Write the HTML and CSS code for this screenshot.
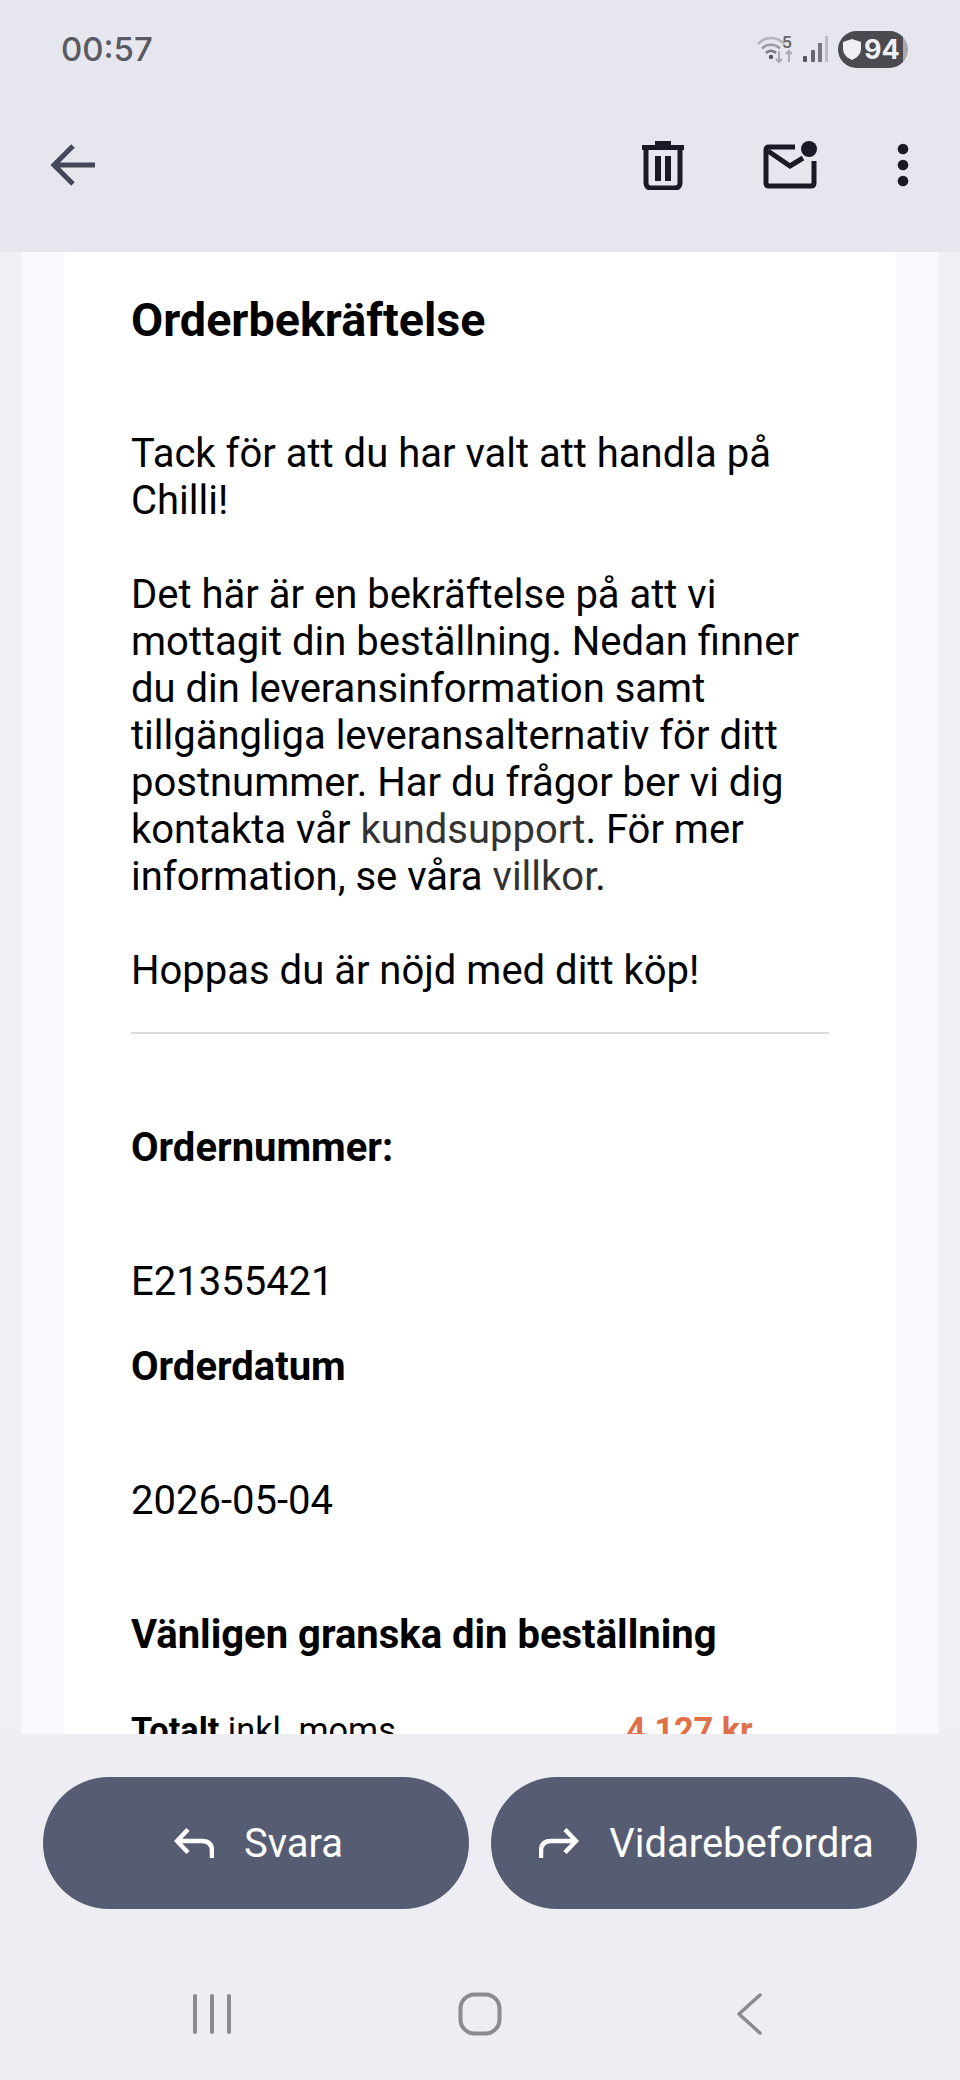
FILE: index.html
```html
<!DOCTYPE html>
<html lang="sv">
<head>
    <title>Orderbekräftelse</title>
    <meta charset="utf-8" />
    <meta name="viewport" content="width=device-width, initial-scale=1" />
    <link rel="stylesheet" href="styles.css">
</head>
<body>
<div class="phone">
    <div class="topbar">
        <div class="status">
            <span class="clock">00:57</span>
            <div class="status-icons">
                <svg class="wifi" width="40" height="30" viewBox="0 0 40 30" fill="none">
                    <path d="M1 10 C8 2 20 2 27 10" stroke="#b4b4ba" stroke-width="2.6"/>
                    <path d="M5 14.500 C10 9.500 18 9.500 23 14.500" stroke="#9a9aa0" stroke-width="2.6"/>
                    <path d="M9 19 C12 16 16 16 19 19" stroke="#77777d" stroke-width="2.6"/>
                    <circle cx="14" cy="23" r="2.2" fill="#55555b"/>
                    <path d="M22 17 V28 M19 25 L22 28 L25 25" stroke="#aaaab0" stroke-width="2"/>
                    <path d="M32 28 V17 M29 20 L32 17 L35 20" stroke="#aaaab0" stroke-width="2"/>
                </svg>
                <span class="wifi-five">5</span>
                <svg class="signal" width="26" height="28" viewBox="0 0 26 28">
                    <rect x="1" y="21" width="4" height="6" rx="1" fill="#55555b"/>
                    <rect x="9" y="15" width="4" height="12" fill="#66666c"/>
                    <rect x="16" y="8" width="4" height="19" fill="#77777d"/>
                    <rect x="23" y="1" width="3" height="26" fill="#bcbcc4"/>
                </svg>
                <div class="battery">
                    <svg width="18" height="21" viewBox="0 0 19 22">
                        <path d="M9.500 0 L19 3 V10 C19 16 15 20 9.500 22 C4 20 0 16 0 10 V3 Z" fill="#f0f0f4"/>
                    </svg>
                    <span>94</span>
                </div>
            </div>
        </div>
        <div class="toolbar">
            <svg class="back" width="46" height="44" viewBox="0 0 46 44" fill="none">
                <path d="M23 3 L4 22 L23 41 M4 22 H45" stroke="#44465a" stroke-width="5"/>
            </svg>
            <div class="actions">
                <svg width="44" height="50" viewBox="0 0 44 50">
                    <path d="M14 1 H30 V5 H43 V10 H1 V5 H14 Z" fill="#1a1a26"/>
                    <path d="M5 10 V43 C5 46 7 48 10 48 H34 C37 48 39 46 39 43 V10" fill="none" stroke="#1a1a26" stroke-width="5"/>
                    <rect x="14" y="16" width="6" height="25" fill="#1a1a26"/>
                    <rect x="24" y="16" width="6" height="25" fill="#1a1a26"/>
                </svg>
                <svg width="56" height="50" viewBox="0 0 56 50" fill="none">
                    <path d="M32 7 H6 Q3 7 3 10 V43 Q3 46 6 46 H48 Q51 46 51 43 V21" stroke="#1a1a26" stroke-width="5"/>
                    <path d="M5 11 L27 26 L40 18" stroke="#1a1a26" stroke-width="5"/>
                    <circle cx="46" cy="9" r="8" fill="#1a1a26"/>
                </svg>
                <svg class="more" width="12" height="44" viewBox="0 0 12 44">
                    <circle cx="6" cy="6" r="5.3" fill="#1a1a26"/>
                    <circle cx="6" cy="22" r="5.3" fill="#1a1a26"/>
                    <circle cx="6" cy="38" r="5.3" fill="#1a1a26"/>
                </svg>
            </div>
        </div>
    </div>

    <div class="mail-scroll">
        <div class="mail-outer">
            <div class="mail">
                <h1>Orderbekräftelse</h1>
                <p class="first">Tack för att du har valt att handla på Chilli!</p>
                <p>Det här är en bekräftelse på att vi mottagit din beställning. Nedan finner du din leveransinformation samt tillgängliga leveransalternativ för ditt postnummer. Har du frågor ber vi dig kontakta vår <a href="#">kundsupport</a>. För mer information, se våra <a href="#">villkor</a>.</p>
                <p>Hoppas du är nöjd med ditt köp!</p>
                <hr />
                <h2 class="order-label">Ordernummer:</h2>
                <div class="order-value">E21355421</div>
                <h2 class="date-label">Orderdatum</h2>
                <div class="order-value">2026-05-04</div>
                <h2 class="review">Vänligen granska din beställning</h2>
                <div class="total">
                    <span><b>Totalt</b> inkl. moms</span>
                    <b class="price">4 127 kr</b>
                </div>
            </div>
        </div>
    </div>

    <div class="bottom">
        <div class="buttons">
            <a class="pill" href="#">
                <svg width="40" height="30" viewBox="0 0 40 30" fill="none">
                    <path d="M14 1.500 L3 13 L14 24.500 M3 13 H28 Q38 13 38 23 V30" stroke="#fff" stroke-width="4.5"/>
                </svg>
                Svara
            </a>
            <a class="pill" href="#">
                <svg width="40" height="30" viewBox="0 0 40 30" fill="none">
                    <path d="M26 1.500 L37 13 L26 24.500 M37 13 H12 Q2 13 2 23 V30" stroke="#fff" stroke-width="4.5"/>
                </svg>
                Vidarebefordra
            </a>
        </div>
        <div class="navbar">
            <svg width="38" height="42" viewBox="0 0 38 42">
                <rect x="0" y="1" width="4" height="40" rx="2" fill="#8a8a90"/>
                <rect x="17" y="1" width="4" height="40" rx="2" fill="#8a8a90"/>
                <rect x="34" y="1" width="4" height="40" rx="2" fill="#8a8a90"/>
            </svg>
            <svg class="nav-home" width="44" height="44" viewBox="0 0 44 44" fill="none">
                <rect x="2.500" y="2.500" width="39" height="39" rx="14" stroke="#8a8a90" stroke-width="4"/>
            </svg>
            <svg class="nav-back" width="30" height="44" viewBox="0 0 30 44" fill="none">
                <path d="M25 3 L4 22 L25 41" stroke="#8a8a90" stroke-width="3.5" stroke-linecap="round" stroke-linejoin="round"/>
            </svg>
        </div>
    </div>
</div>
</body>
</html>
```

FILE: styles.css
```css
* {
    box-sizing: border-box;
}

html, body {
    margin: 0;
    padding: 0;
}

body {
    background: #ededf3;
    font-family: Roboto, 'Liberation Sans', sans-serif;
}

.phone {
    display: flex;
    flex-direction: column;
    width: 960px;
    height: 2080px;
    overflow: hidden;
}

.topbar {
    flex: 0 0 252px;
    background: #e6e6ef;
}

.status {
    display: flex;
    justify-content: space-between;
    align-items: center;
    height: 98px;
    padding: 0 52px 0 61px;
}

.clock {
    color: #5a5a62;
    font-family: Inter, sans-serif;
    font-size: 33px;
    font-weight: 500;
}

.status-icons {
    display: flex;
    align-items: center;
}

.wifi-five {
    width: 0;
    margin-left: -15px;
    margin-right: 15px;
    margin-top: -14px;
    color: #66666c;
    font-family: Inter, sans-serif;
    font-size: 16px;
    font-weight: 600;
}

.signal {
    margin-left: 5px;
    margin-right: 10px;
}

.battery {
    display: flex;
    align-items: center;
    gap: 3px;
    width: 70px;
    height: 37px;
    padding-left: 5px;
    border-radius: 19px;
    background: linear-gradient(90deg, #4a4a50 93%, #a8a8ae 93%);
    color: #f0f0f4;
    font-family: Inter, sans-serif;
    font-size: 27px;
    font-weight: 700;
}

.toolbar {
    display: flex;
    justify-content: space-between;
    align-items: center;
    height: 70px;
    margin-top: 32px;
    padding: 0 51px 0 50px;
}

.actions {
    display: flex;
    align-items: center;
    gap: 78px;
}

.mail-scroll {
    flex: 1;
    min-height: 0;
    overflow: hidden;
    padding: 0 21px;
    background: #efeff5;
}

.mail-outer {
    padding: 0 43px;
    background: #f8f8fd;
}

.mail {
    padding: 40px 67px 40px;
    background: #fff;
    color: #000;
    font-size: 40px;
    line-height: 47px;
}

h1, h2 {
    margin: 0;
    font-weight: 700;
}

h1 {
    font-size: 46.7px;
    line-height: 56px;
}

h2 {
    font-size: 40px;
    line-height: 47px;
}

p {
    margin: 47px 0 0;
}

p.first {
    margin-top: 82px;
}

.mail a {
    color: #333;
    text-decoration: none;
}

hr {
    height: 2px;
    margin: 38px 0 0;
    border: 0;
    background: #dcdcdc;
}

.order-label {
    margin-top: 90px;
}

.order-value {
    margin-top: 87px;
}

.date-label {
    margin-top: 38px;
}

.review {
    margin-top: 87px;
}

.total {
    display: grid;
    grid-template-columns: 495px 1fr;
    margin-top: 49px;
    font-size: 34.3px;
}

.price {
    color: #e0704a;
}

.bottom {
    flex: 0 0 346px;
    background: #ededf3;
}

.buttons {
    display: flex;
    gap: 22px;
    padding: 43px 43px 0;
}

.pill {
    display: flex;
    flex: 1;
    justify-content: center;
    align-items: center;
    gap: 30px;
    height: 132px;
    padding-left: 5px;
    border-radius: 66px;
    background: #565d72;
    color: #fff;
    font-size: 40px;
    text-decoration: none;
}

.navbar {
    display: flex;
    align-items: center;
    padding: 83px 0 0 193px;
}

.nav-home {
    margin-left: 227px;
}

.nav-back {
    margin-left: 233px;
}
```
